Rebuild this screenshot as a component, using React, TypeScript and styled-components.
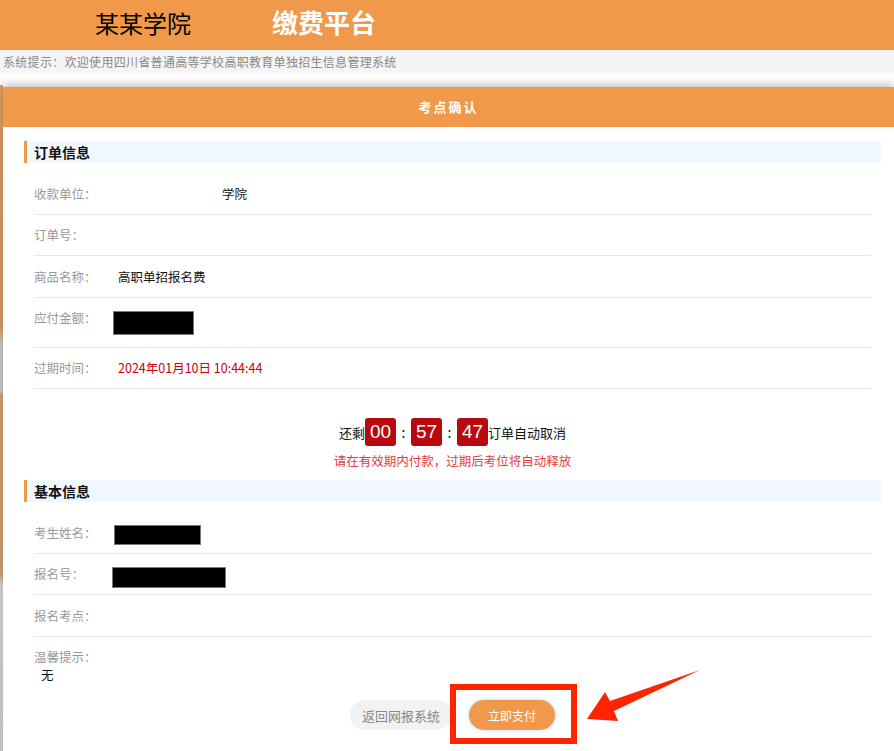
import React from "react";
import styled, { createGlobalStyle } from "styled-components";

const GlobalStyle = createGlobalStyle`
  html, body {
    margin: 0;
    padding: 0;
    background: #fff;
    font-family: "Noto Sans CJK SC", "Liberation Sans", sans-serif;
  }
`;

type Field = {
  label: string;
  value?: string;
  offset?: number;
  red?: boolean;
  hidden?: number;
  hiddenAt?: number;
  hiddenH?: number;
  tall?: boolean;
};

const orderFields: Field[] = [
  { label: "收款单位：", value: "学院", offset: 104 },
  { label: "订单号：" },
  { label: "商品名称：", value: "高职单招报名费" },
  { label: "应付金额：", hidden: 81, hiddenAt: -5, hiddenH: 24, tall: true },
  { label: "过期时间：", value: "2024年01月10日 10:44:44", red: true },
];

const baseFields: Field[] = [
  { label: "考生姓名：", hidden: 87, hiddenAt: -4, hiddenH: 20 },
  { label: "报名号：", hidden: 114, hiddenAt: -6, hiddenH: 21 },
  { label: "报名考点：" },
];

const App = () => {
  return (
    <>
      <GlobalStyle />
      <Page>
        <TopBar>
          <SchoolName>某某学院</SchoolName>
          <PlatformName>缴费平台</PlatformName>
        </TopBar>
        <NoticeBar>系统提示：欢迎使用四川省普通高等学校高职教育单独招生信息管理系统</NoticeBar>
        <Main>
          <Backdrop />
          <Card>
            <CardHeader>考点确认</CardHeader>
            <CardBody>
              <SectionTitle>订单信息</SectionTitle>
              {orderFields.map((f) => (
                <InfoRow key={f.label} $tall={f.tall}>
                  <Label>{f.label}</Label>
                  {f.hidden ? (
                    <Redacted
                      style={{ width: f.hidden, height: f.hiddenH, marginLeft: f.hiddenAt }}
                    />
                  ) : (
                    <Value $red={f.red} style={f.offset ? { marginLeft: f.offset } : undefined}>
                      {f.value}
                    </Value>
                  )}
                </InfoRow>
              ))}

              <Countdown>
                <CountLine>
                  <span>还剩</span>
                  <TimeBox>00</TimeBox>
                  <Colon>:</Colon>
                  <TimeBox>57</TimeBox>
                  <Colon>:</Colon>
                  <TimeBox>47</TimeBox>
                  <span>订单自动取消</span>
                </CountLine>
                <Warning>请在有效期内付款，过期后考位将自动释放</Warning>
              </Countdown>

              <SectionTitle>基本信息</SectionTitle>
              {baseFields.map((f) => (
                <InfoRow key={f.label}>
                  <Label>{f.label}</Label>
                  {f.hidden ? (
                    <Redacted
                      style={{ width: f.hidden, height: f.hiddenH, marginLeft: f.hiddenAt }}
                    />
                  ) : null}
                </InfoRow>
              ))}
              <TipRow>
                <Label>温馨提示：</Label>
                <TipText>无</TipText>
              </TipRow>

              <ButtonBar>
                <GhostButton>返回网报系统</GhostButton>
                <PayWrap>
                  <PayButton>立即支付</PayButton>
                  <Highlight />
                  <Arrow width="120" height="60" viewBox="0 0 120 60">
                    <polygon points="0,52 18,25 23,34 113,3 27,44 31,54" fill="#ff2400" />
                  </Arrow>
                </PayWrap>
              </ButtonBar>
            </CardBody>
          </Card>
        </Main>
      </Page>
    </>
  );
};

export default App;

// 상단

const Page = styled.div`
  width: 894px;
  height: 751px;
  overflow: hidden;
`;

const TopBar = styled.div`
  height: 50px;
  background: #f0994a;
  display: flex;
  align-items: center;
  padding-left: 95px;
  gap: 81px;
`;

const SchoolName = styled.div`
  font-size: 24px;
  color: #000;
  margin-top: -6px;
`;

const PlatformName = styled.div`
  font-size: 26px;
  font-weight: 700;
  color: #fff;
  margin-top: -8px;
`;

const NoticeBar = styled.div`
  height: 23px;
  line-height: 23px;
  background: #f5f5f5;
  color: #888;
  font-size: 12px;
  padding-left: 3px;
  letter-spacing: 0.3px;
`;

const Main = styled.div`
  display: flex;
  padding-top: 14px;
`;

const Backdrop = styled.div`
  width: 3px;
  flex: none;
  margin-top: -2px;
  background: linear-gradient(
    to bottom,
    #e4a160 0,
    #d99c62 240px,
    #cfcfcf 260px,
    #cfcfcf 306px,
    #d7a36f 310px,
    #d4a475 488px,
    #d9d9d9 500px,
    #d4d4d4 100%
  );
`;

const Card = styled.div`
  flex: 1;
  background: #fff;
  box-shadow: 0 -2px 9px rgba(0, 0, 0, 0.28);
  height: 700px;
`;

const CardHeader = styled.div`
  height: 40px;
  line-height: 40px;
  background: #f0994a;
  color: #fff;
  font-size: 13px;
  font-weight: 700;
  text-align: center;
  letter-spacing: 2px;
`;

const CardBody = styled.div`
  padding: 14px 13px 0 21px;
`;

const SectionTitle = styled.div`
  height: 22px;
  line-height: 22px;
  background: #f0f8ff;
  border-left: 3px solid #f0994a;
  padding-left: 7px;
  font-size: 14px;
  font-weight: 700;
  color: #111;
  margin-bottom: 10px;
`;

const InfoRow = styled.div<{ $tall?: boolean }>`
  display: flex;
  align-items: flex-start;
  margin: 0 10px;
  padding: 11.5px 0 12px;
  height: ${(p) => (p.$tall ? "25.5px" : "17px")};
  border-bottom: 1px solid #e8e8e8;
`;

const Label = styled.div`
  width: 84px;
  flex: none;
  font-size: 12.5px;
  line-height: 17px;
  color: #999;
`;

const Value = styled.div<{ $red?: boolean }>`
  font-size: 12.5px;
  line-height: 17px;
  color: ${(p) => (p.$red ? "#c8000f" : "#111")};
`;

const Redacted = styled.div`
  background: #000;
  border: 1px solid #777;
  box-sizing: border-box;
  margin-top: 1.5px;
`;

// 倒计时

const Countdown = styled.div`
  padding: 29px 0 10px;
  text-align: center;
`;

const CountLine = styled.div`
  display: flex;
  justify-content: center;
  align-items: center;
  font-size: 13px;
  color: #111;
`;

const TimeBox = styled.span`
  width: 31px;
  height: 28px;
  line-height: 28px;
  border-radius: 3px;
  background: #b8090f;
  color: #fff;
  font-size: 19px;
  text-align: center;
  font-family: "Liberation Sans", sans-serif;
`;

const Colon = styled.span`
  width: 15px;
  text-align: center;
  font-size: 14px;
`;

const Warning = styled.div`
  margin-top: 5px;
  font-size: 12.5px;
  color: #e6393f;
`;

const TipRow = styled.div`
  margin: 0 10px;
  padding: 11.5px 0 0;
`;

const TipText = styled.div`
  padding-left: 7px;
  font-size: 12.5px;
  line-height: 19px;
  color: #111;
`;

// 按钮

const ButtonBar = styled.div`
  display: flex;
  justify-content: center;
  align-items: center;
  gap: 17px;
  margin-top: 16px;
`;

const GhostButton = styled.button`
  width: 102px;
  height: 30px;
  border: none;
  border-radius: 15px;
  background: #f2f2f2;
  color: #888;
  font-size: 13px;
  font-family: inherit;
  padding: 0;
`;

const PayWrap = styled.div`
  position: relative;
`;

const PayButton = styled.button`
  display: block;
  width: 86px;
  height: 30px;
  border: none;
  border-radius: 15px;
  background: #f0994a;
  color: #fff;
  font-size: 12px;
  font-family: inherit;
  padding: 0;
  box-shadow: 0 0 4px rgba(110, 170, 255, 0.55);
`;

const Highlight = styled.div`
  position: absolute;
  left: -19px;
  top: -16px;
  width: 127px;
  height: 60px;
  border: 6px solid #ff2400;
  box-sizing: border-box;
`;

const Arrow = styled.svg`
  position: absolute;
  left: 118px;
  top: -33px;
`;
